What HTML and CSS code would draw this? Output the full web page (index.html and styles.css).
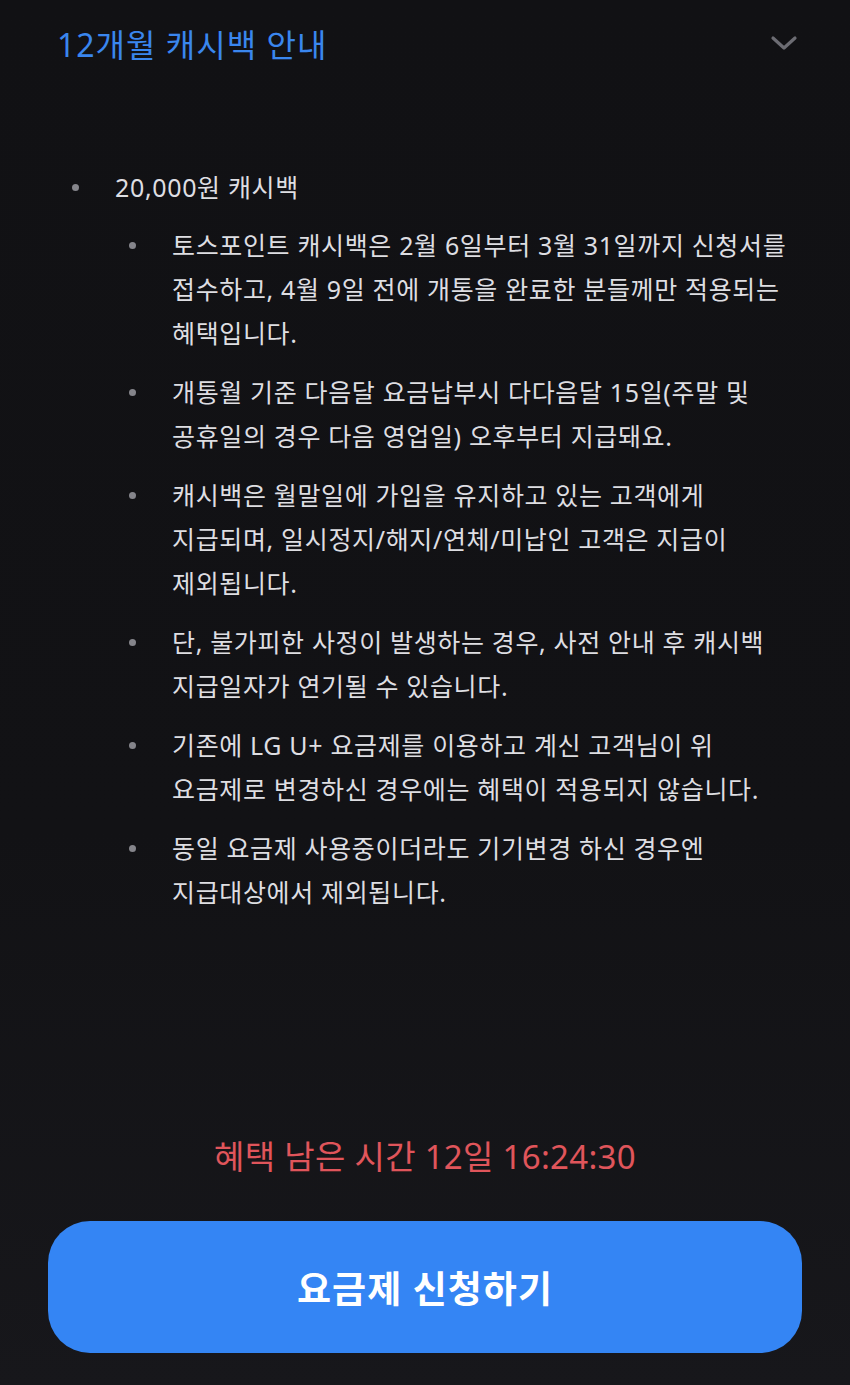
FILE: index.html
```html
<!DOCTYPE html>
<html lang="ko">
<head>
<meta charset="utf-8">
<title>12개월 캐시백 안내</title>
<link rel="stylesheet" href="styles.css">
</head>
<body>
<main class="page">
  <section class="content">
    <header class="acc-head">
      <h2 class="acc-title">12개월 캐시백 안내</h2>
      <svg class="chev" width="28" height="16" viewBox="0 0 28 16"><path d="M3 3 L14 13 L25 3" fill="none" stroke="#6c6c73" stroke-width="3.2" stroke-linecap="round" stroke-linejoin="round"/></svg>
    </header>
    <ul class="list outer">
      <li class="row"><span class="dot"></span><span class="txt">20,000원 캐시백</span></li>
    </ul>
    <ul class="list inner">
      <li class="row"><span class="dot"></span><span class="txt">토스포인트 캐시백은 2월 6일부터 3월 31일까지 신청서를 접수하고, 4월 9일 전에 개통을 완료한 분들께만 적용되는 혜택입니다.</span></li>
      <li class="row"><span class="dot"></span><span class="txt">개통월 기준 다음달 요금납부시 다다음달 15일(주말 및 공휴일의 경우 다음 영업일) 오후부터 지급돼요.</span></li>
      <li class="row"><span class="dot"></span><span class="txt">캐시백은 월말일에 가입을 유지하고 있는 고객에게 지급되며, 일시정지/해지/연체/미납인 고객은 지급이 제외됩니다.</span></li>
      <li class="row"><span class="dot"></span><span class="txt">단, 불가피한 사정이 발생하는 경우, 사전 안내 후 캐시백 지급일자가 연기될 수 있습니다.</span></li>
      <li class="row"><span class="dot"></span><span class="txt">기존에 LG U+ 요금제를 이용하고 계신 고객님이 위 요금제로 변경하신 경우에는 혜택이 적용되지 않습니다.</span></li>
      <li class="row"><span class="dot"></span><span class="txt">동일 요금제 사용중이더라도 기기변경 하신 경우엔 지급대상에서 제외됩니다.</span></li>
    </ul>
  </section>
  <footer class="cta">
    <p class="timer">혜택 남은 시간 12일 16:24:30</p>
    <button class="apply">요금제 신청하기</button>
  </footer>
</main>
</body>
</html>
```

FILE: styles.css
```css
* { box-sizing: border-box; }
html, body { margin: 0; padding: 0; }
body {
  background: linear-gradient(#111114 0%, #121215 60%, #17171b 100%);
  font-family: "Noto Sans", "Noto Sans CJK KR", sans-serif;
  color: #dedee2;
}
.page {
  min-height: 1385px;
  display: flex;
  flex-direction: column;
}
.acc-head {
  height: 86px;
  display: flex;
  align-items: center;
  justify-content: space-between;
  padding: 0 52px 0 57px;
}
.acc-title {
  margin: 0;
  font-size: 32px;
  font-weight: 400;
  color: #3a86ee;
  letter-spacing: 1px;
}
.chev { display: block; }
.list {
  list-style: none;
  margin: 0;
  padding: 0 53px 0 57px;
}
.outer { margin-top: 79px; }
.inner { padding-left: 114px; margin-top: 14px; }
.row {
  display: grid;
  grid-template-columns: 58px 1fr;
  font-size: 25px;
  line-height: 44px;
}
.inner .row + .row { margin-top: 15px; }
.dot {
  width: 7px;
  height: 7px;
  border-radius: 50%;
  background: #85858b;
  margin: 19px 0 0 15px;
}
.txt {
  word-break: keep-all;
  letter-spacing: 0.65px;
}
.cta {
  margin-top: auto;
  padding: 0 48px 32px;
}
.timer {
  margin: 0 0 39px;
  height: 50px;
  line-height: 50px;
  text-align: center;
  font-size: 33px;
  letter-spacing: 0.3px;
  color: #e0555b;
}
.apply {
  display: block;
  width: 100%;
  height: 132px;
  border: none;
  border-radius: 42px;
  background: #3485f4;
  color: #ffffff;
  font-family: "Noto Sans", "Noto Sans CJK KR", sans-serif;
  font-size: 37px;
  font-weight: 700;
  letter-spacing: 1px;
}
```
